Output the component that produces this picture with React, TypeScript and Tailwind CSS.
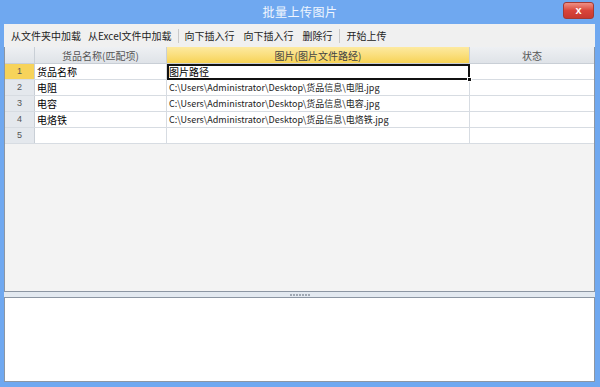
import React from "react";

const cjk = { fontFamily: '"Microsoft YaHei", "Noto Sans CJK SC", "Liberation Sans", sans-serif' };

const rows = [
  { n: "1", name: "货品名称", path: "图片路径", status: "" },
  { n: "2", name: "电阻", path: "C:\\Users\\Administrator\\Desktop\\货品信息\\电阻.jpg", status: "" },
  { n: "3", name: "电容", path: "C:\\Users\\Administrator\\Desktop\\货品信息\\电容.jpg", status: "" },
  { n: "4", name: "电烙铁", path: "C:\\Users\\Administrator\\Desktop\\货品信息\\电烙铁.jpg", status: "" },
  { n: "5", name: "", path: "", status: "" },
];

function Sep() {
  return <div className="w-px h-[14px] bg-[#c9c9c9] mx-[6px]" />;
}

export default function App() {
  return (
    <div className="w-[600px] h-[387px] bg-[#6fa8f0] flex flex-col overflow-hidden" style={cjk}>
      <div className="h-[24px] relative flex items-center justify-center shrink-0">
        <span className="text-[12px] text-white/90 tracking-[0.5px]">批量上传图片</span>
        <div className="absolute right-[6px] top-[2px] w-[31px] h-[17px] rounded-[3px] border border-[#a33a33] bg-gradient-to-b from-[#ee8f85] via-[#d9453a] to-[#c8382f] flex items-center justify-center">
          <span className="text-white text-[11px] font-bold leading-none" style={{ fontFamily: '"Liberation Sans", sans-serif' }}>x</span>
        </div>
      </div>
      <div className="flex-1 flex flex-col ml-[4px] mr-[5px] mb-[5px] min-h-0">
        <div className="h-[23px] bg-[#f0f0f0] flex items-center pl-[6px] text-[10px] text-[#222] shrink-0">
          <span className="px-[1px]">从文件夹中加载</span>
          <span className="ml-[6px]">从Excel文件中加载</span>
          <Sep />
          <span>向下插入行</span>
          <span className="ml-[9px]">向下插入行</span>
          <span className="ml-[9px]">删除行</span>
          <Sep />
          <span className="ml-[1px]">开始上传</span>
        </div>
        <div className="flex-1 bg-[#f3f3f3] border-l border-r border-b border-[#8c96a3] flex flex-col min-h-0">
          <div className="flex h-[17px] shrink-0 text-[10px] text-[#555] border-b border-[#c9cfd6]">
            <div className="w-[30px] bg-gradient-to-b from-[#eef0f3] to-[#dfe3e8] border-r border-[#c9cfd6]" />
            <div className="w-[132px] bg-gradient-to-b from-[#eef0f3] to-[#dfe3e8] border-r border-[#c9cfd6] flex items-center justify-center">货品名称(匹配项)</div>
            <div className="w-[303px] bg-gradient-to-b from-[#fdeaa0] to-[#f7d353] border-r border-[#c9cfd6] flex items-center justify-center text-[#444]">图片(图片文件路经)</div>
            <div className="w-[124px] bg-gradient-to-b from-[#eef0f3] to-[#dfe3e8] flex items-center justify-center">状态</div>
          </div>
          {rows.map((r, i) => (
            <div key={r.n} className="flex h-[16px] shrink-0 border-b border-[#d7dce2]">
              <div
                className={
                  "w-[30px] border-r border-[#c9cfd6] flex items-center justify-center text-[9px] text-[#555] " +
                  (i === 0 ? "bg-[#f7d35a]" : "bg-[#e4e8ed]")
                }
                style={{ fontFamily: '"Liberation Sans", sans-serif' }}
              >
                {r.n}
              </div>
              <div className="w-[132px] bg-white border-r border-[#d7dce2] flex items-center pl-[2px] text-[10px] text-black">{r.name}</div>
              {i === 0 ? (
                <div className="w-[303px] bg-white relative flex items-center pl-[2px] text-[10px] text-black">
                  <div className="absolute left-0 top-0 right-0 bottom-[-1px] border-2 border-[#111]" />
                  <div className="absolute right-[-2px] bottom-[-3px] w-[5px] h-[5px] bg-[#111] border border-white" />
                  <span className="relative">{r.path}</span>
                </div>
              ) : (
                <div className="w-[303px] bg-white border-r border-[#d7dce2] flex items-center pl-[2px] text-[9px] text-[#222] whitespace-nowrap">{r.path}</div>
              )}
              <div className="w-[124px] bg-white" />
            </div>
          ))}
        </div>
        <div className="h-[5px] bg-[#e3e9f0] flex items-center justify-center shrink-0">
          <div className="flex gap-[1px]">
            {Array.from({ length: 7 }).map((_, k) => (
              <div key={k} className="w-[2px] h-[2px] bg-[#a0a8b2]" />
            ))}
          </div>
        </div>
        <div className="h-[85px] bg-white border border-[#8c96a3] shrink-0" />
      </div>
    </div>
  );
}
